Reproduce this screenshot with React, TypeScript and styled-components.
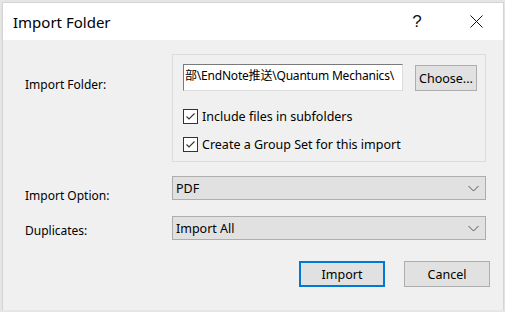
import styled, { createGlobalStyle } from "styled-components"

const Global = createGlobalStyle`
    html, body {
        margin: 0;
        padding: 0;
        background: #e6e6e6;
        font-family: "Noto Sans", "Noto Sans CJK SC", sans-serif;
        font-size: 12px;
        color: #000;
    }
`

const CheckMark = () => (
    <svg width="11" height="11" viewBox="0 0 11 11">
        <polyline points="1.5,5.5 4,8 9.5,2.5" fill="none" stroke="#333" strokeWidth="1.1" />
    </svg>
)

const Chevron = () => (
    <svg width="11" height="7" viewBox="0 0 11 7">
        <polyline points="0.5,1 5.5,6 10.5,1" fill="none" stroke="#555" strokeWidth="1" />
    </svg>
)

const CloseIcon = () => (
    <svg width="13" height="13" viewBox="0 0 13 13">
        <path d="M0.5 0.5 L12.5 12.5 M12.5 0.5 L0.5 12.5" stroke="#111" strokeWidth="1" />
    </svg>
)

export default function App() {
    return (
        <>
            <Global />
            <Window>
                <TitleBar>
                    <Title>Import Folder</Title>
                    <TitleButton $mr={13}>?</TitleButton>
                    <TitleButton $mr={4}><CloseIcon /></TitleButton>
                </TitleBar>
                <Body>
                    <Row $mt={14}>
                        <Label $pt={24}>Import Folder:</Label>
                        <GroupBox>
                            <PathRow>
                                <PathInput>部\EndNote推送\Quantum Mechanics\</PathInput>
                                <Button $w={62} $h={26}>Choose...</Button>
                            </PathRow>
                            <CheckRow $mt={18}>
                                <CheckBox><CheckMark /></CheckBox>
                                <span>Include files in subfolders</span>
                            </CheckRow>
                            <CheckRow $mt={13}>
                                <CheckBox><CheckMark /></CheckBox>
                                <span>Create a Group Set for this import</span>
                            </CheckRow>
                        </GroupBox>
                    </Row>
                    <Row $mt={14}>
                        <Label $pt={13}>Import Option:</Label>
                        <Select>
                            <span>PDF</span>
                            <Chevron />
                        </Select>
                    </Row>
                    <Row $mt={16}>
                        <Label $pt={8}>Duplicates:</Label>
                        <Select>
                            <span>Import All</span>
                            <Chevron />
                        </Select>
                    </Row>
                    <Buttons>
                        <Button $w={86} $h={26} $primary>Import</Button>
                        <Button $w={86} $h={26}>Cancel</Button>
                    </Buttons>
                </Body>
            </Window>
        </>
    )
}

const Window = styled.div`
    margin: 3px 0 0 3px;
    width: 500px;
    height: 307px;
    background: #f0f0f0;
    display: flex;
    flex-direction: column;
    box-shadow: 0 0 0 1px #d4d4d4, 0 1px 2px rgba(0, 0, 0, 0.25);
`
const TitleBar = styled.div`
    height: 37px;
    background: #fff;
    display: flex;
    align-items: center;
`
const Title = styled.div`
    flex: 1;
    padding-left: 10px;
    font-size: 15px;
    color: #000;
`
const TitleButton = styled.div<{ $mr: number }>`
    width: 46px;
    height: 37px;
    margin-right: ${({ $mr }) => $mr}px;
    display: flex;
    align-items: center;
    justify-content: center;
    font-family: "Liberation Sans", sans-serif;
    font-size: 17px;
    color: #111;
`
const Body = styled.div`
    display: flex;
    flex-direction: column;
    padding: 0 0 0 22px;
`
const Row = styled.div<{ $mt: number }>`
    display: flex;
    align-items: flex-start;
    height: max-content;
    margin-top: ${({ $mt }) => $mt}px;
`
const Label = styled.div<{ $pt: number }>`
    width: 147px;
    height: 0;
    flex-shrink: 0;
    padding-top: ${({ $pt }) => $pt}px;
    line-height: 14px;
    white-space: nowrap;
`
const GroupBox = styled.div`
    width: 314px;
    height: 108px;
    box-sizing: border-box;
    border: 1px solid #dcdcdc;
    padding: 9px 0 0 10px;
`
const PathRow = styled.div`
    display: flex;
    align-items: flex-start;
    gap: 12px;
`
const PathInput = styled.div`
    width: 220px;
    height: 27px;
    box-sizing: border-box;
    background: #fff;
    border: 1px solid #7a7a7a;
    border-right-color: #dcdcdc;
    border-bottom-color: #dcdcdc;
    padding-left: 1px;
    font-size: 12px;
    letter-spacing: -0.2px;
    line-height: 22px;
    white-space: nowrap;
    overflow: hidden;
`
const Button = styled.div<{ $w: number; $h: number; $primary?: boolean }>`
    width: ${({ $w }) => $w}px;
    height: ${({ $h }) => $h}px;
    box-sizing: border-box;
    background: #e1e1e1;
    border: ${({ $primary }) => ($primary ? "2px solid #0078d7" : "1px solid #adadad")};
    display: flex;
    align-items: center;
    justify-content: center;
    font-size: 12.5px;
    margin-top: 1px;
`
const CheckRow = styled.div<{ $mt: number }>`
    display: flex;
    align-items: center;
    gap: 4px;
    margin-top: ${({ $mt }) => $mt}px;
    font-size: 12.5px;
    line-height: 15px;
`
const CheckBox = styled.div`
    width: 15px;
    height: 15px;
    box-sizing: border-box;
    border: 1px solid #333;
    background: #fff;
    display: flex;
    align-items: center;
    justify-content: center;
`
const Select = styled.div`
    width: 314px;
    height: 24px;
    box-sizing: border-box;
    background: #e1e1e1;
    border: 1px solid #adadad;
    display: flex;
    align-items: center;
    justify-content: space-between;
    padding: 0 6px 0 3px;
    font-size: 12.5px;
`
const Buttons = styled.div`
    display: flex;
    justify-content: flex-end;
    gap: 19px;
    margin-top: 20px;
    padding-right: 13px;
`
